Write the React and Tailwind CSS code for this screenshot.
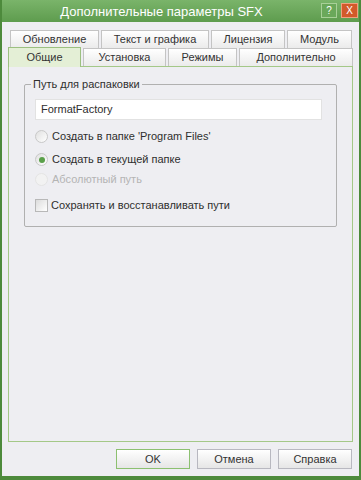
export default function App() {
  const font = { fontFamily: '"Liberation Sans", Arial, sans-serif' };
  const tab = "border border-[#c4c4c4] border-b-0 bg-gradient-to-b from-white to-[#ebebeb] text-center leading-[17px]";
  return (
    <div className="w-[361px] h-[480px] bg-[#4d8a3c] p-[2px] pt-0 flex flex-col" style={font}>
      {/* Title bar */}
      <div className="h-[22px] flex items-center relative bg-gradient-to-b from-[#7ab46a] to-[#5e9c4e]">
        <div className="flex-1 text-center text-white text-[13px] leading-none pr-[38px]">Дополнительные параметры SFX</div>
        <div className="absolute right-[1px] top-[3px] flex gap-[4px]">
          <div className="w-[16px] h-[15px] border border-[#a8d098] bg-[#6aa85a] text-white text-[10px] leading-[13px] text-center">?</div>
          <div className="w-[17px] h-[15px] border border-[#f0a080] bg-[#d25a2a] text-white text-[10px] leading-[13px] text-center">X</div>
        </div>
      </div>
      {/* Body */}
      <div className="flex-1 bg-[#eeeef2] flex flex-col px-[6px] pt-[8px] pb-[2px] border-b-[2px] border-[#4d8a3c]">
        {/* Tabs row 1 */}
        <div className="flex h-[18px] pl-[2px] pr-[1px] gap-[2px] text-[11px] text-[#333]">
          <div className={`w-[89px] ${tab}`}>Обновление</div>
          <div className={`w-[108px] ${tab}`}>Текст и графика</div>
          <div className={`w-[74px] ${tab}`}>Лицензия</div>
          <div className={`flex-1 ${tab}`}>Модуль</div>
        </div>
        {/* Tabs row 2 */}
        <div className="flex h-[18px] gap-[2px] text-[11px] text-[#333] relative z-10">
          <div className="w-[73px] h-[20px] -mt-[1px] border border-[#9cc080] border-b-0 bg-[#e4efd6] text-center leading-[18px]">Общие</div>
          <div className={`w-[83px] ${tab}`}>Установка</div>
          <div className={`w-[69px] ${tab}`}>Режимы</div>
          <div className={`flex-1 ${tab}`}>Дополнительно</div>
        </div>
        {/* Panel */}
        <div className="h-[376px] border border-[#a4c888] bg-[#eeeef2] px-[15px] pt-[17px]">
          <div className="relative border border-[#b0b0b0] rounded-[2px] h-[143px] px-[10px] pt-[14px] text-[11px] text-[#2e2e2e]">
            <div className="absolute -top-[8px] left-[6px] bg-[#eeeef2] px-[2px] leading-[14px]">Путь для распаковки</div>
            <div className="h-[21px] w-[287px] bg-white border border-[#e2e2e2] flex items-center pl-[5px]">FormatFactory</div>
            <div className="flex items-center gap-[4px] mt-[10px] h-[13px]">
              <div className="w-[13px] h-[13px] rounded-full border border-[#c8c8c8] bg-gradient-to-br from-[#e0e0e0] to-white" />
              <span>Создать в папке 'Program Files'</span>
            </div>
            <div className="flex items-center gap-[4px] mt-[10px] h-[13px]">
              <div className="w-[13px] h-[13px] rounded-full border border-[#c8c8c8] bg-gradient-to-br from-[#e0e0e0] to-white flex items-center justify-center">
                <div className="w-[6px] h-[6px] rounded-full bg-[#5aa04a]" />
              </div>
              <span>Создать в текущей папке</span>
            </div>
            <div className="flex items-center gap-[4px] mt-[7px] h-[13px] text-[#b4b4b4]">
              <div className="w-[13px] h-[13px] rounded-full border border-[#e4e4e4] bg-[#f2f2f2]" />
              <span>Абсолютный путь</span>
            </div>
            <div className="flex items-center gap-[3px] mt-[13px] h-[13px]">
              <div className="w-[13px] h-[13px] border border-[#b8b8b8] bg-gradient-to-br from-[#dcdcdc] to-white" />
              <span>Сохранять и восстанавливать пути</span>
            </div>
          </div>
        </div>
        {/* Buttons */}
        <div className="flex justify-end gap-[7px] mt-[7px] pr-[1px] text-[11px] text-[#333]">
          <div className="w-[74px] h-[20px] border border-[#8cc070] bg-gradient-to-b from-white to-[#e6e6e6] flex items-center justify-center">OK</div>
          <div className="w-[74px] h-[20px] border border-[#b8b8c0] bg-gradient-to-b from-white to-[#e6e6e6] flex items-center justify-center">Отмена</div>
          <div className="w-[74px] h-[20px] border border-[#b8b8c0] bg-gradient-to-b from-white to-[#e6e6e6] flex items-center justify-center">Справка</div>
        </div>
      </div>
    </div>
  );
}
